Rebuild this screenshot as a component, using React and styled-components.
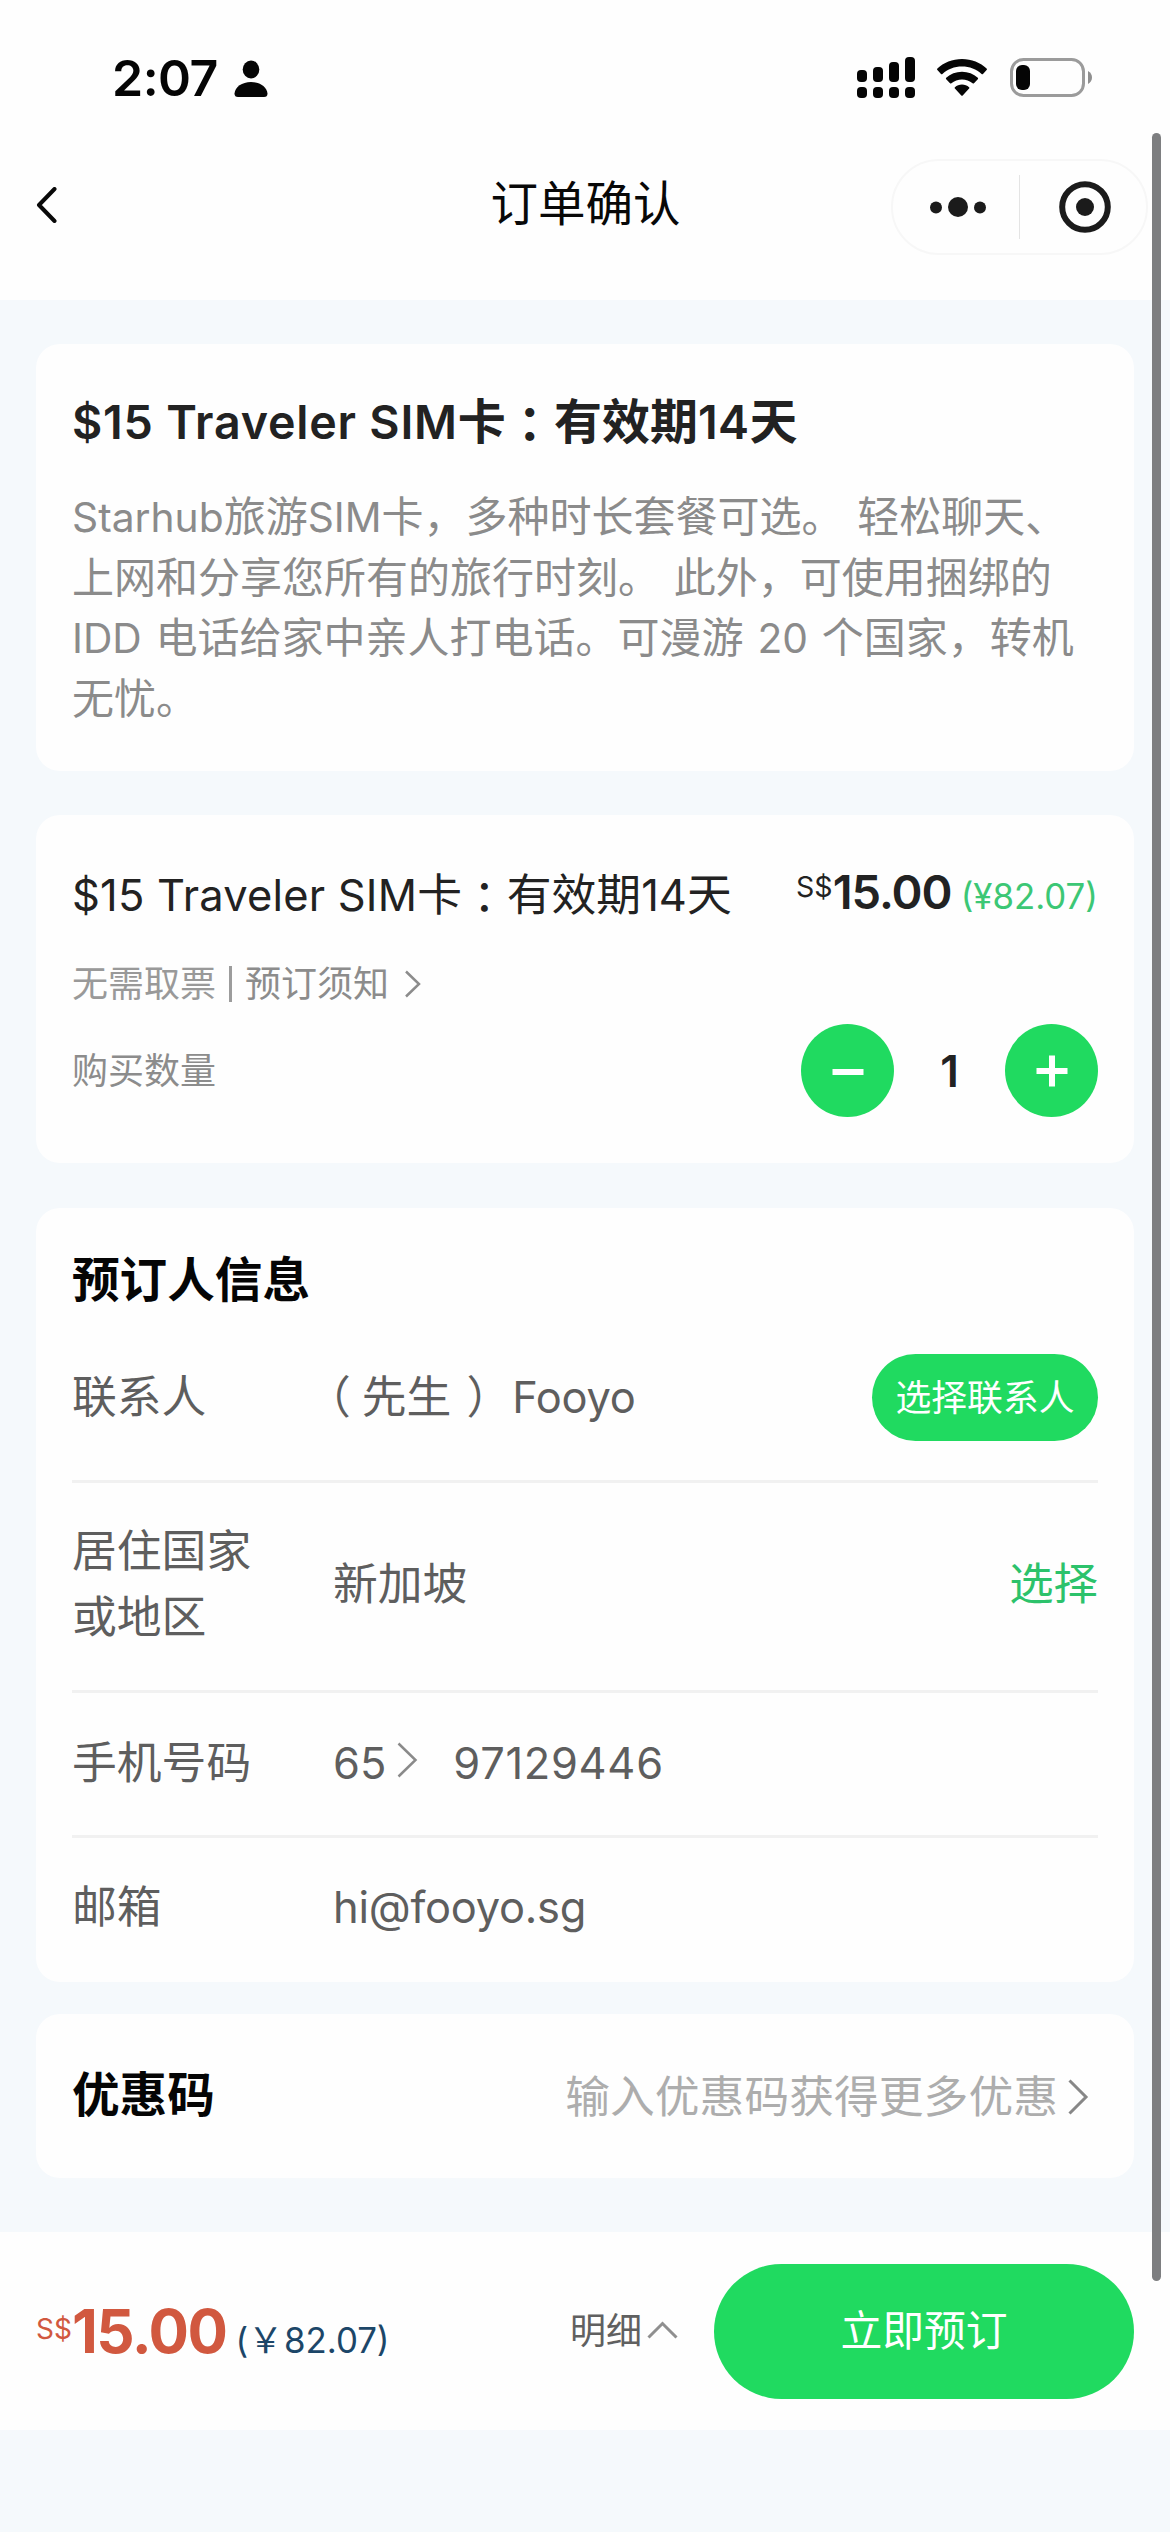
import React, { useState } from "react";
import styled, { createGlobalStyle } from "styled-components";

const GREEN = "#20da60";

const GlobalStyle = createGlobalStyle`
  * { box-sizing: border-box; }
  html, body { margin: 0; padding: 0; }
  body {
    background: #f5f9fc;
    font-family: Inter, "Noto Sans CJK SC", sans-serif;
    -webkit-font-smoothing: antialiased;
  }
  button { font-family: inherit; border: 0; padding: 0; margin: 0; cursor: pointer; }
  svg { display: block; flex: none; }
`;

const Page = styled.div`
  width: 1170px;
  height: 2532px;
  display: flex;
  flex-direction: column;
  background: #f5f9fc;
  overflow: hidden;
`;

const StatusBar = styled.div`
  height: 133px;
  padding: 0 77px 0 112px;
  display: flex;
  align-items: flex-start;
  justify-content: space-between;
  background: #fefefe;
`;

const Clock = styled.div`
  display: flex;
  align-items: center;
  gap: 16px;
  padding-top: 53px;
  height: 103px;
  font-size: 50px;
  font-weight: 600;
  line-height: 50px;
  letter-spacing: -0.5px;
  color: #050505;
`;

const StatusIcons = styled.div`
  display: flex;
  align-items: flex-start;
  padding-top: 56px;
`;

const NavBar = styled.div`
  height: 167px;
  padding: 0 22px 0 36px;
  display: grid;
  grid-template-columns: 257px 1fr 257px;
  align-items: flex-start;
  background: #fefefe;
`;

const BackButton = styled.button`
  background: none;
  height: 143px;
  display: flex;
  align-items: center;
`;

const NavTitle = styled.h1`
  margin: 0;
  text-align: center;
  font-size: 47.5px;
  font-weight: 400;
  line-height: 142px;
  color: #080808;
  padding-right: 13px;
`;

const Capsule = styled.div`
  width: 257px;
  height: 96px;
  margin-top: 26px;
  border: 2px solid #f7f7f7;
  border-radius: 48px;
  display: flex;
  align-items: center;
`;

const CapsuleButton = styled.button`
  flex: 1;
  background: none;
  display: flex;
  justify-content: center;
  padding-left: 4px;
`;

const CapsuleDivider = styled.div`
  width: 1px;
  height: 64px;
  background: #e4e4e4;
`;

const Content = styled.main`
  height: 1932px;
  padding: 44px 36px 0;
  background: #f5f9fc;
`;

const Card = styled.section`
  height: ${(p) => p.$height}px;
  margin-bottom: ${(p) => p.$gap || 0}px;
  padding: 0 36px;
  border-radius: 24px;
  background: #fefefe;
`;

const Latin = styled.span`
  font-size: 0.97em;
  letter-spacing: ${(p) => p.$spacing || 0}px;
`;

const Colon = styled.span`
  display: inline-block;
  font-family: "Noto Sans CJK JP", sans-serif;
  line-height: 1;
  transform: translateY(3px);
`;

const ProductTitle = styled.h2`
  margin: 0;
  padding-top: 48px;
  height: 108px;
  font-size: 48px;
  font-weight: 600;
  line-height: 60px;
  color: #222;
  white-space: nowrap;
`;

const Description = styled.p`
  margin: 35px 0 0;
  font-size: 42px;
  line-height: 60px;
  word-spacing: 2px;
  color: #8b8b8b;
  white-space: nowrap;
`;

const Row = styled.div`
  display: flex;
  align-items: center;
  height: ${(p) => p.$height}px;
`;

const OptionName = styled.div`
  flex: 1;
  height: 60px;
  font-size: 44.8px;
  line-height: 60px;
  color: #222;
  white-space: nowrap;
`;

const Price = styled.div`
  display: flex;
  align-items: baseline;
  line-height: 60px;
  color: #222;
  white-space: nowrap;
`;

const Currency = styled.span`
  font-size: 28.5px;
  transform: translateY(-12px);
`;

const Amount = styled.span`
  font-size: 47px;
  font-weight: 600;
  letter-spacing: -1px;
`;

const Converted = styled.span`
  margin-left: 9px;
  font-size: 34.8px;
  color: #3cc775;
`;

const Muted = styled.span`
  font-size: 36px;
  line-height: 48px;
  color: ${(p) => p.$color || "#8c8c8c"};
`;

const Bar = styled.span`
  width: 3px;
  height: 36px;
  margin: 0 13px 0 13px;
  background: #9c9c9c;
`;

const Stepper = styled.div`
  display: flex;
  align-items: center;
  margin-left: auto;
`;

const RoundButton = styled.button`
  width: 93px;
  height: 93px;
  border-radius: 50%;
  background: ${GREEN};
  display: flex;
  align-items: center;
  justify-content: center;
`;

const Count = styled.span`
  width: 111px;
  text-align: center;
  font-size: 44px;
  font-weight: 600;
  color: #222;
`;

const SectionTitle = styled.h2`
  margin: 0;
  padding-bottom: ${(p) => p.$lift || 0}px;
  font-size: 47.6px;
  font-weight: 700;
  line-height: 60px;
  color: #050505;
`;

const FormRow = styled.div`
  display: flex;
  align-items: center;
  height: ${(p) => p.$height}px;
  padding-bottom: ${(p) => p.$lift || 0}px;
  border-bottom: ${(p) => (p.$last ? "0" : "3px solid #f1f1f1")};
`;

const Label = styled.div`
  width: 261px;
  font-size: 44.8px;
  line-height: 66px;
  color: #5e5e5e;
`;

const Value = styled.div`
  flex: 1;
  display: flex;
  align-items: center;
  font-size: 44.8px;
  line-height: 60px;
  color: #5e5e5e;
  white-space: nowrap;
`;

const Bracket = styled.span`
  margin: ${(p) => p.$margin};
`;

const PillButton = styled.button`
  width: 226px;
  height: 87px;
  padding-bottom: 5px;
  border-radius: 44px;
  background: ${GREEN};
  color: #fff;
  font-size: 35.8px;
`;

const LinkButton = styled.button`
  background: none;
  color: #2cc26b;
  font-size: 44.4px;
  line-height: 60px;
`;

const Placeholder = styled.span`
  margin-left: auto;
  font-size: 44.8px;
  line-height: 60px;
  color: #adadad;
`;

const Footer = styled.footer`
  height: 198px;
  padding: 0 36px;
  display: flex;
  align-items: center;
  background: #fefefe;
`;

const Total = styled.div`
  flex: 1;
  display: flex;
  align-items: baseline;
  white-space: nowrap;
  color: #d1583f;
`;

const TotalCurrency = styled.span`
  font-size: 28px;
  transform: translateY(-14px);
`;

const TotalAmount = styled.span`
  font-size: 60px;
  font-weight: 700;
  letter-spacing: -1.5px;
`;

const TotalConverted = styled.span`
  margin-left: 9px;
  font-size: 34.8px;
  color: #1c4668;
`;

const Yen = styled.span`
  margin-right: 1px;
  font-family: "Noto Sans CJK JP", sans-serif;
`;

const Details = styled.button`
  display: flex;
  align-items: center;
  gap: 5px;
  margin-right: 36px;
  padding-bottom: 7px;
  background: none;
  color: #606060;
  font-size: 36px;
`;

const SubmitButton = styled.button`
  width: 420px;
  height: 135px;
  padding-bottom: 7px;
  border-radius: 68px;
  background: ${GREEN};
  color: #fff;
  font-size: 41.8px;
`;

const ScrollThumb = styled.div`
  position: absolute;
  top: 133px;
  left: 1152px;
  width: 9px;
  height: 2148px;
  border-radius: 5px;
  background: #7d7e80;
`;

const Spacer = styled.span`
  width: ${(p) => p.$width}px;
  flex: none;
`;

const IconDown = styled.span`
  padding-top: ${(p) => p.$by}px;
`;

const ChevronBox = styled.span`
  display: block;
  margin: ${(p) => p.$margin};
`;

const PersonIcon = () => (
  <svg width="34" height="37" viewBox="0 0 34 37" fill="#050505">
    <ellipse cx="17" cy="9.5" rx="8.3" ry="9" />
    <path d="M4 37 Q0.5 37 0.5 33.5 C1 27 8 22 17 22 C26 22 33 27 33.5 33.5 Q33.5 37 30 37 Z" />
  </svg>
);

const SignalIcon = () => (
  <svg width="58" height="43" viewBox="0 0 58 43" fill="#050505">
    {[14, 11, 6, 1].map((top, i) => (
      <g key={top}>
        <rect x={i * 16} y={top} width="10" height={26 - top} rx="4" />
        <rect x={i * 16} y="31" width="10" height="11" rx="4" />
      </g>
    ))}
  </svg>
);

const WifiIcon = () => (
  <svg width="50" height="38" viewBox="0 0 50 38" fill="#050505">
    <path d="M25 0 C34.5 0 43.5 3.6 49.6 9.6 Q50.3 10.4 49.6 11.1 L46 14.9 Q45.3 15.5 44.6 14.9 C39.5 10.2 32.5 7.6 25 7.6 C17.5 7.6 10.5 10.2 5.4 14.9 Q4.7 15.5 4 14.9 L0.4 11.1 Q-0.3 10.4 0.4 9.6 C6.5 3.6 15.5 0 25 0 Z" />
    <path d="M25 12.8 C31 12.8 36.6 14.9 40.8 18.8 Q41.5 19.5 40.8 20.2 L37 24.2 Q36.3 24.8 35.6 24.2 C32.7 21.7 29 20.4 25 20.4 C21 20.4 17.3 21.7 14.4 24.2 Q13.7 24.8 13 24.2 L9.2 20.2 Q8.5 19.5 9.2 18.8 C13.4 14.9 19 12.8 25 12.8 Z" />
    <path d="M25 25.6 C27.7 25.6 30.2 26.5 32.1 28.2 Q32.8 28.9 32.1 29.6 L25.7 36.4 Q25 37 24.3 36.4 L17.9 29.6 Q17.2 28.9 17.9 28.2 C19.8 26.5 22.3 25.6 25 25.6 Z" />
  </svg>
);

const BatteryIcon = () => (
  <svg width="83" height="40" viewBox="0 0 83 40">
    <rect x="1.5" y="1.5" width="72" height="36" rx="12" fill="none" stroke="#9b9b9b" strokeWidth="3" />
    <rect x="6" y="7" width="14" height="25" rx="6" fill="#050505" />
    <path d="M78 13 C80.6 14.3 82 16.7 82 19.5 C82 22.3 80.6 24.7 78 26 Z" fill="#8f8f8f" />
  </svg>
);

const Chevron = ({ width, height, stroke, color, d }) => (
  <svg width={width} height={height} viewBox={`0 0 ${width} ${height}`} fill="none" stroke={color} strokeWidth={stroke}>
    <path d={d} />
  </svg>
);

export default function App() {
  const [count, setCount] = useState(1);
  return (
    <>
      <GlobalStyle />
      <Page>
        <StatusBar>
          <Clock>
            <span>2:07</span>
            <PersonIcon />
          </Clock>
          <StatusIcons>
            <SignalIcon />
            <Spacer $width={22} />
            <IconDown $by={3}><WifiIcon /></IconDown>
            <Spacer $width={23} />
            <IconDown $by={2}><BatteryIcon /></IconDown>
          </StatusIcons>
        </StatusBar>

        <NavBar>
          <BackButton aria-label="返回">
            <svg width="22" height="36" viewBox="0 0 22 36" fill="none" stroke="#080808" strokeWidth="4" strokeLinecap="round" strokeLinejoin="round">
              <path d="M18.5 2 L3 18 L18.5 34" />
            </svg>
          </BackButton>
          <NavTitle>订单确认</NavTitle>
          <Capsule>
            <CapsuleButton aria-label="更多">
              <svg width="58" height="22" viewBox="0 0 58 22" fill="#1b1b1b">
                <circle cx="7" cy="11.5" r="6" />
                <circle cx="29" cy="11" r="10" />
                <circle cx="51" cy="11.5" r="6" />
              </svg>
            </CapsuleButton>
            <CapsuleDivider />
            <CapsuleButton aria-label="关闭">
              <svg width="52" height="52" viewBox="0 0 52 52">
                <circle cx="26" cy="26" r="22.8" fill="none" stroke="#1b1b1b" strokeWidth="6" />
                <circle cx="26" cy="26" r="9" fill="#1b1b1b" />
              </svg>
            </CapsuleButton>
          </Capsule>
        </NavBar>

        <Content>
          <Card $height={427} $gap={44}>
            <ProductTitle>
              <Latin $spacing={0.8}>$15 Traveler SIM</Latin>卡<Colon>：</Colon>有效期<Latin $spacing={0.4}>14</Latin>天
            </ProductTitle>
            <Description>
              <Latin>Starhub</Latin>旅游<Latin>SIM</Latin>卡，多种时长套餐可选。 轻松聊天、
              <br />
              上网和分享您所有的旅行时刻。 此外，可使用捆绑的
              <br />
              <Latin>IDD</Latin> 电话给家中亲人打电话。可漫游 <Latin>20</Latin> 个国家，转机
              <br />
              无忧。
            </Description>
          </Card>

          <Card $height={348} $gap={45}>
            <Row $height={160}>
              <OptionName>
                <Latin $spacing={0.2}>$15 Traveler SIM</Latin>卡<Colon>：</Colon>有效期<Latin>14</Latin>天
              </OptionName>
              <Price>
                <Currency>S$</Currency>
                <Amount>15.00</Amount>
                <Converted>(¥82.07)</Converted>
              </Price>
            </Row>
            <Row $height={18}>
              <Muted $color="#999">无需取票</Muted>
              <Bar />
              <Muted>预订须知</Muted>
              <ChevronBox $margin="0 0 0 15px">
                <Chevron width={18} height={28} stroke={2.5} color="#8c8c8c" d="M2 1.5 L15 14 L2 26.5" />
              </ChevronBox>
            </Row>
            <Row $height={155}>
              <Muted>购买数量</Muted>
              <Stepper>
                <RoundButton aria-label="减少" onClick={() => setCount((c) => Math.max(1, c - 1))}>
                  <svg width="32" height="32" viewBox="0 0 32 32" stroke="#fff" strokeWidth="6">
                    <path d="M0.5 17 H31.5" />
                  </svg>
                </RoundButton>
                <Count>{count}</Count>
                <RoundButton aria-label="增加" onClick={() => setCount((c) => c + 1)}>
                  <svg width="32" height="32" viewBox="0 0 32 32" stroke="#fff" strokeWidth="6">
                    <path d="M0.5 16 H31.5 M16 0.5 V31.5" />
                  </svg>
                </RoundButton>
              </Stepper>
            </Row>
          </Card>

          <Card $height={774} $gap={32}>
            <Row $height={144}>
              <SectionTitle>预订人信息</SectionTitle>
            </Row>
            <FormRow $height={131} $lift={38}>
              <Label>联系人</Label>
              <Value>
                <Bracket $margin="0 11px 0 -27px">（</Bracket>先生<Bracket $margin="0 1px 0 15px">）</Bracket>
                <Latin $spacing={-0.3}>Fooyo</Latin>
              </Value>
              <PillButton>选择联系人</PillButton>
            </FormRow>
            <FormRow $height={210} $lift={5}>
              <Label>居住国家<br />或地区</Label>
              <Value>新加坡</Value>
              <LinkButton>选择</LinkButton>
            </FormRow>
            <FormRow $height={145} $lift={3}>
              <Label>手机号码</Label>
              <Value>
                <Latin>65</Latin>
                <ChevronBox $margin="0 35px 6px 11px">
                  <Chevron width={21} height={36} stroke={2.5} color="#8a8a8a" d="M1.5 1.5 L18.5 18 L1.5 34.5" />
                </ChevronBox>
                <Latin $spacing={0.7}>97129446</Latin>
              </Value>
            </FormRow>
            <FormRow $height={139} $lift={2} $last>
              <Label>邮箱</Label>
              <Value><Latin $spacing={-0.25}>hi@fooyo.sg</Latin></Value>
            </FormRow>
          </Card>

          <Card $height={164}>
            <Row $height={166}>
              <SectionTitle $lift={4}>优惠码</SectionTitle>
              <Placeholder>输入优惠码获得更多优惠</Placeholder>
              <ChevronBox $margin="0 9px 0 10px">
                <Chevron width={21} height={36} stroke={3} color="#878787" d="M1.5 1.5 L18 18 L1.5 34.5" />
              </ChevronBox>
            </Row>
          </Card>
        </Content>

        <Footer>
          <Total>
            <TotalCurrency>S$</TotalCurrency>
            <TotalAmount>15.00</TotalAmount>
            <TotalConverted>(<Yen>￥</Yen>82.07)</TotalConverted>
          </Total>
          <Details>
            明细
            <ChevronBox $margin="5px 0 0">
              <Chevron width={31} height={18} stroke={3} color="#8f8f8f" d="M1.5 16.5 L15.5 2.5 L29.5 16.5" />
            </ChevronBox>
          </Details>
          <SubmitButton>立即预订</SubmitButton>
        </Footer>
        <ScrollThumb />
      </Page>
    </>
  );
}
